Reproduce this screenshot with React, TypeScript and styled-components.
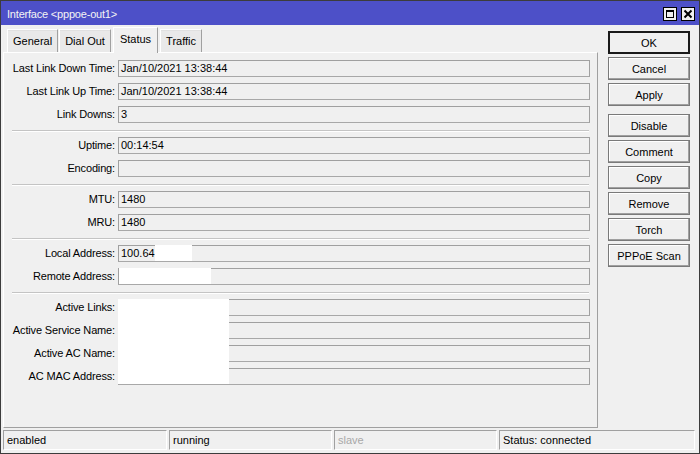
import React from "react";
import styled, { createGlobalStyle } from "styled-components";

const GlobalStyle = createGlobalStyle`
	html, body {
		margin: 0;
		padding: 0;
		background: #f0f0f0;
	}
	* {
		box-sizing: border-box;
	}
`;

const Window = styled.div`
	width: 700px;
	height: 454px;
	border: 1px solid #3c3c3c;
	background: #f0f0f0;
	display: flex;
	flex-direction: column;
	font-family: "Liberation Sans", Arial, sans-serif;
	font-size: 11px;
	color: #000;
	overflow: hidden;
`;

const TitleBar = styled.div`
	height: 24px;
	background: #4d50c8;
	display: flex;
	align-items: center;
	justify-content: space-between;
	padding: 0 4px 0 6px;
	flex-shrink: 0;
`;

const Title = styled.div`
	color: #f4f4f4;
	font-size: 11px;
	letter-spacing: -0.2px;
	padding-top: 2px;
`;

const TitleButtons = styled.div`
	display: flex;
	gap: 4px;
	padding-top: 2px;
`;

const TitleButton = styled.div`
	width: 14px;
	height: 14px;
	border: 1px solid #000;
	background: #f0f0f0;
	display: flex;
	align-items: center;
	justify-content: center;
`;

const Body = styled.div`
	flex: 1;
	display: flex;
	min-height: 0;
`;

const LeftColumn = styled.div`
	width: 597px;
	padding-left: 2px;
	padding-top: 2px;
	display: flex;
	flex-direction: column;
`;

const TabRow = styled.div`
	height: 25px;
	display: flex;
	align-items: flex-end;
	gap: 1px;
	padding-left: 4px;
	position: relative;
	z-index: 1;
`;

const Tab = styled.div<{ $active?: boolean }>`
	height: ${(p) => (p.$active ? "26px" : "23px")};
	margin-bottom: ${(p) => (p.$active ? "-1px" : "0")};
	padding: 0 ${(p) => (p.$active ? "6px" : "5px")};
	margin-left: ${(p) => (p.$active ? "1px" : "0")};
	margin-right: ${(p) => (p.$active ? "1px" : "0")};
	display: flex;
	align-items: center;
	padding-bottom: ${(p) => (p.$active ? "3px" : "0")};
	background: ${(p) => (p.$active ? "#f0f0f0" : "#e9e9e9")};
	border-left: 1px solid #ffffff;
	border-top: 1px solid #ffffff;
	border-right: 1px solid #a0a0a0;
	box-shadow: ${(p) => (p.$active ? "none" : "inset 0 1px 0 #e0e0e0")};
`;

const Panel = styled.div`
	width: 595px;
	height: 376px;
	border-top: 1px solid #ffffff;
	border-left: 1px solid #ffffff;
	border-right: 1px solid #a0a0a0;
	border-bottom: 1px solid #a0a0a0;
	padding: 7px 7px 0 0;
	display: flex;
	flex-direction: column;
`;

const Group = styled.div`
	position: relative;
	display: grid;
	grid-template-columns: 114px 1fr;
	row-gap: 6px;
`;

const Label = styled.div`
	height: 17px;
	line-height: 17px;
	text-align: right;
	padding-right: 3px;
	white-space: nowrap;
	letter-spacing: -0.15px;
`;

const Field = styled.div`
	height: 17px;
	border: 1px solid #a0a0a0;
	border-bottom-color: #a8a8a8;
	line-height: 15px;
	padding-left: 2px;
	display: flex;
	align-items: center;
	white-space: nowrap;
`;

const Blank = styled.span<{ $w: number; $left?: number }>`
	display: inline-block;
	background: #ffffff;
	width: ${(p) => p.$w}px;
	height: 16px;
	margin-left: ${(p) => p.$left ?? 0}px;
	margin-top: -1px;
`;

const Cover = styled.div`
	position: absolute;
	left: 114px;
	top: 0;
	width: 111px;
	height: 85px;
	background: #ffffff;
`;

const Separator = styled.div`
	height: 2px;
	margin: 7px 1px 5px 8px;
	border-top: 1px solid #c4c4c4;
	border-bottom: 1px solid #ffffff;
`;

const ButtonColumn = styled.div`
	display: flex;
	flex-direction: column;
	gap: 3px;
	padding-top: 6px;
	margin-left: 10px;
`;

const Button = styled.div<{ $default?: boolean; $gapBefore?: boolean }>`
	width: 82px;
	height: 23px;
	display: flex;
	align-items: center;
	justify-content: center;
	background: #f0f0f0;
	border: ${(p) => (p.$default ? "2px solid #1a1a1a" : "1px solid #7a7a7a")};
	box-shadow: ${(p) =>
		p.$default ? "none" : "inset -1px -1px 0 #a0a0a0, inset 1px 1px 0 #ffffff"};
	margin-top: ${(p) => (p.$gapBefore ? "5px" : "0")};
`;

const StatusBar = styled.div`
	height: 25px;
	display: flex;
	gap: 2px;
	padding: 2px 4px 3px 2px;
	flex-shrink: 0;
`;

const StatusCell = styled.div<{ $w?: number; $muted?: boolean }>`
	${(p) => (p.$w ? `width: ${p.$w}px;` : "flex: 1;")}
	height: 20px;
	border-top: 1px solid #a0a0a0;
	border-left: 1px solid #a0a0a0;
	border-right: 1px solid #ffffff;
	border-bottom: 1px solid #ffffff;
	padding-left: 3px;
	display: flex;
	align-items: center;
	color: ${(p) => (p.$muted ? "#a8a8a8" : "#000")};
`;

const groups: { label: string; value?: React.ReactNode }[][] = [
	[
		{ label: "Last Link Down Time:", value: "Jan/10/2021 13:38:44" },
		{ label: "Last Link Up Time:", value: "Jan/10/2021 13:38:44" },
		{ label: "Link Downs:", value: "3" },
	],
	[
		{ label: "Uptime:", value: "00:14:54" },
		{ label: "Encoding:" },
	],
	[
		{ label: "MTU:", value: "1480" },
		{ label: "MRU:", value: "1480" },
	],
	[
		{
			label: "Local Address:",
			value: (
				<>
					100.64
					<Blank $w={37} />
				</>
			),
		},
		{ label: "Remote Address:", value: <Blank $w={92} $left={-2} /> },
	],
];

const activeRows = [
	"Active Links:",
	"Active Service Name:",
	"Active AC Name:",
	"AC MAC Address:",
];

const buttons = ["OK", "Cancel", "Apply", "Disable", "Comment", "Copy", "Remove", "Torch", "PPPoE Scan"];

export default function App() {
	return (
		<>
			<GlobalStyle />
			<Window>
				<TitleBar>
					<Title>Interface &lt;pppoe-out1&gt;</Title>
					<TitleButtons>
						<TitleButton>
							<svg width="10" height="10" viewBox="0 0 10 10">
								<rect x="1.5" y="1.5" width="7" height="7" fill="none" stroke="#000" strokeWidth="1" />
								<rect x="1" y="1" width="8" height="2" fill="#000" />
							</svg>
						</TitleButton>
						<TitleButton>
							<svg width="10" height="10" viewBox="0 0 10 10">
								<path d="M1.5 1.5 L8.5 8.5 M8.5 1.5 L1.5 8.5" stroke="#000" strokeWidth="2" />
							</svg>
						</TitleButton>
					</TitleButtons>
				</TitleBar>
				<Body>
					<LeftColumn>
						<TabRow>
							<Tab>General</Tab>
							<Tab>Dial Out</Tab>
							<Tab $active>Status</Tab>
							<Tab>Traffic</Tab>
						</TabRow>
						<Panel>
							{groups.map((rows, gi) => (
								<React.Fragment key={gi}>
									<Group>
										{rows.map((r) => (
											<React.Fragment key={r.label}>
												<Label>{r.label}</Label>
												<Field>{r.value}</Field>
											</React.Fragment>
										))}
									</Group>
									<Separator />
								</React.Fragment>
							))}
							<Group>
								{activeRows.map((l) => (
									<React.Fragment key={l}>
										<Label>{l}</Label>
										<Field />
									</React.Fragment>
								))}
								<Cover />
							</Group>
						</Panel>
					</LeftColumn>
					<ButtonColumn>
						{buttons.map((b, i) => (
							<Button key={b} $default={i === 0} $gapBefore={b === "Disable"}>
								{b}
							</Button>
						))}
					</ButtonColumn>
				</Body>
				<StatusBar>
					<StatusCell $w={164}>enabled</StatusCell>
					<StatusCell $w={163}>running</StatusCell>
					<StatusCell $w={163} $muted>
						slave
					</StatusCell>
					<StatusCell>Status: connected</StatusCell>
				</StatusBar>
			</Window>
		</>
	);
}
